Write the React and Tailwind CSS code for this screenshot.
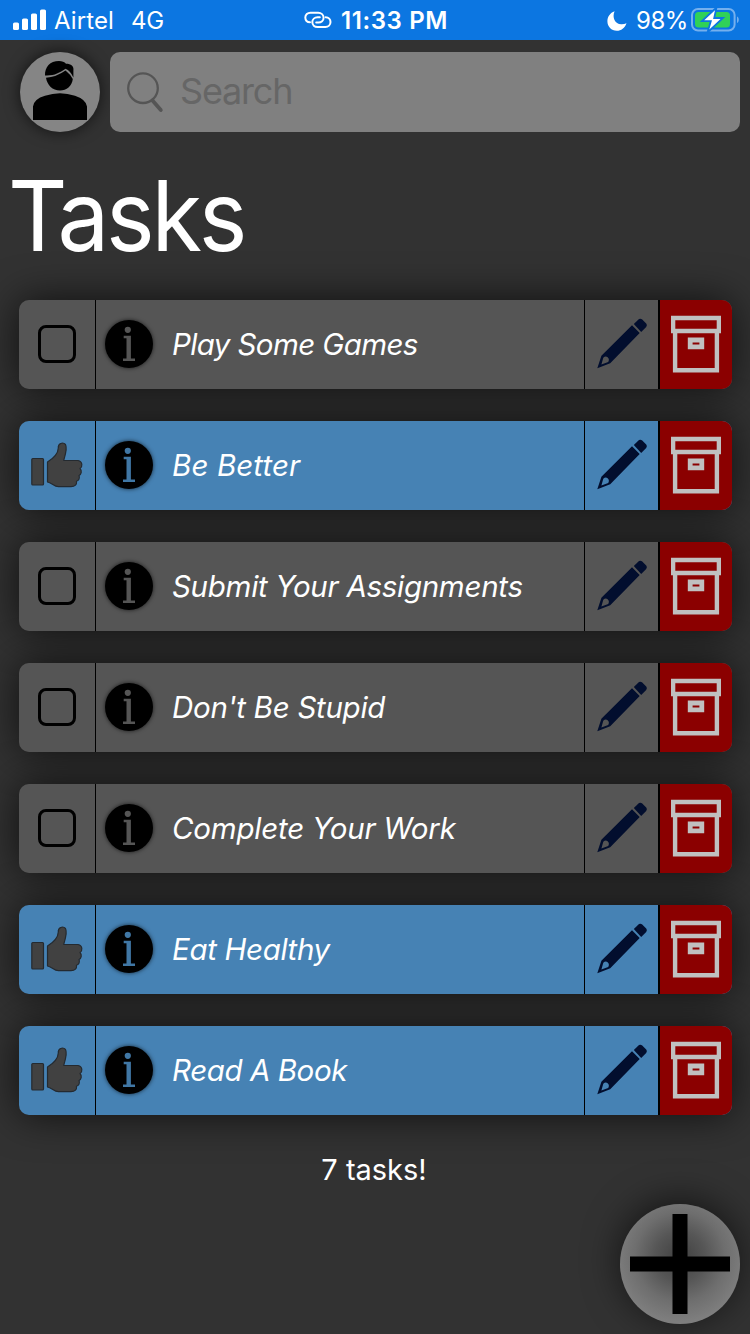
const TASKS = [
  { title: "Play Some Games", done: false, spacing: "tracking-[-0.6px]" },
  { title: "Be Better", done: true, spacing: "tracking-[0.1px]" },
  { title: "Submit Your Assignments", done: false, spacing: "tracking-[-0.28px]" },
  { title: "Don't Be Stupid", done: false, spacing: "tracking-[-0.27px]" },
  { title: "Complete Your Work", done: false, spacing: "tracking-[-0.2px]" },
  { title: "Eat Healthy", done: true, spacing: "tracking-[-0.35px]" },
  { title: "Read A Book", done: true, spacing: "tracking-[-0.42px]" },
];

function StatusBar() {
  return (
    <header className="flex h-10 shrink-0 items-center bg-[#0c76e1] text-[24px] leading-10 whitespace-nowrap">
      <svg className="ml-[13px] h-[22px] w-[34px] shrink-0" viewBox="0 0 34 22" fill="white">
        <rect x="0" y="13.5" width="6" height="7.5" rx="1.6" />
        <rect x="9" y="9.5" width="6" height="11.5" rx="1.6" />
        <rect x="18" y="4.5" width="6" height="16.5" rx="1.6" />
        <rect x="27" y="0.5" width="6" height="20.5" rx="1.6" />
      </svg>
      <span className="mt-0.5 ml-[7px] w-[77px] tracking-[0.1px]">Airtel</span>
      <span className="mt-0.5 w-[173px] tracking-[-0.3px]">4G</span>
      <svg className="h-[18px] w-[28px] shrink-0" viewBox="0 0 28 18" fill="none" stroke="white" strokeWidth="2" strokeLinecap="round">
        <path d="M6 11.3C3 11.3 1.3 9.3 1.3 6.6C1.3 3.7 3.6 1.7 6.4 1.7H14.2C17.2 1.7 19.6 3.9 19.6 6.7C19.6 9.5 17.2 11.5 14.4 11.5H12.2" />
        <path d="M21.7 6.3C24.6 6.3 26.5 8.5 26.5 11.1C26.5 13.9 24.3 16.1 21.4 16.1H13.6C10.6 16.1 8.3 13.9 8.3 11.1C8.3 8.3 10.6 6.3 13.6 6.3H15.8" />
      </svg>
      <span className="mt-0.5 ml-[9px] w-[266px] font-semibold tracking-[0.6px]">11:33 PM</span>
      <svg className="mt-px h-[20px] w-[20px] shrink-0" viewBox="0 0 20 20" fill="white">
        <path d="M7.6 .3C4.8 6.6 8 13.2 14.2 13.3C16.2 13.4 17.8 13 19.5 12.2C17.8 17 14.2 19.8 9.8 19.8C4.4 19.8.4 15.6.4 10.3C.4 6 3.1 1.8 7.6.3Z" />
      </svg>
      <span className="mt-0.5 ml-[9px] w-[55px] tracking-[-0.5px]">98%</span>
      <svg className="h-6 w-12 shrink-0" viewBox="0 0 48 24">
        <rect x="1" y="1" width="42.6" height="21.5" rx="6" fill="none" stroke="#75b0ee" strokeWidth="2" />
        <rect x="4" y="4" width="35" height="15.5" rx="3.5" fill="#30d158" />
        <path d="M46 8.5C48.4 9.3 48.4 14 46 15Z" fill="#75b0ee" />
        <path d="M25.5 -.5L11 13.2H19.8L16.5 24.5L32 10H23.2Z" fill="white" stroke="#0c76e1" strokeWidth="1.8" />
      </svg>
    </header>
  );
}

function Avatar() {
  return (
    <button className="size-20 rounded-full bg-[#858585] shadow-[0_0_16px_rgba(0,0,0,0.65)]">
      <svg viewBox="0 0 80 80" className="size-20">
        <path d="M13 68V54.5Q14 47 25 43.8Q40 38.5 55 43.8Q66 47.5 67 54.5V68Z" />
        <path d="M26 25.7Q36 25.2 45.5 18.5Q50.5 22.5 52.8 27C52 34 46.5 38.5 40 38.5C32.5 38.5 27.2 33 26 25.7Z" />
        <path d="M25 23.5C24.7 15 30 9 39 9C42 9 44.5 10 46 11.8C51 11.8 54.2 14.5 53.4 18.5V25.5Q50.5 19 45.5 16.8C39 21 34.5 24 25 23.5Z" />
      </svg>
    </button>
  );
}

function ThumbIcon() {
  return (
    <svg viewBox="0.5 0 76 89" className="h-[89px] w-[76px]" fill="#414141" stroke="#242a30" strokeWidth="1.2" strokeLinejoin="round">
      <rect x="13.3" y="37.5" width="11.7" height="26.5" rx="1" />
      <path d="M29 41Q39.5 34.5 39.8 27C39.3 22.5 44.3 20.5 47 23.5C49 27 47 33 45.2 39.5H59.5C64.5 40.5 64 46 61.5 47.5C64 50 62.5 53.5 60.5 54.5C61.5 57 60.5 59.5 58 60.3C58.5 63.5 56.5 65.7 52.5 65.7H40C35.5 65.7 33 61.5 29 61Z" />
    </svg>
  );
}

function InfoIcon() {
  return (
    <svg viewBox="0 0 48 48" className="mb-0.5 size-12 shrink-0 rounded-full bg-black fill-current shadow-[0_0_4px_rgba(0,0,0,0.7)]">
      <circle cx="22.8" cy="9.8" r="3.1" />
      <path d="M18.7 15.7H25.9V38.6H30V41H18V38.6H21.5V18.2H18.7Z" />
    </svg>
  );
}

function PencilIcon() {
  return (
    <svg viewBox="0 0 52 52" className="mb-px size-[52px]" fill="#020e2e">
      <path d="M37.8 5.9L43 1Q44.8 .2 46.5 1.7L50.4 5.8Q51.4 7.4 50.2 9L45.2 14Z" />
      <path d="M36 7.2L43.7 15.1L14.2 45.3L1.3 50.3L5.4 37.8ZM7.3 39.8L5.4 46.6L12.2 44Q13.8 41 11.6 39.2Q9.4 37.8 7.3 39.8Z" fillRule="evenodd" />
    </svg>
  );
}

function ArchiveIcon() {
  return (
    <svg viewBox="0 0 50 58" className="mb-0.5 h-[58px] w-[50px]" fill="none" stroke="#c0c0c0" strokeWidth="4.4">
      <path d="M2.1 3H47.9V16H2.1Z" />
      <path d="M4.1 16V55.2H45.9V16" />
      <path d="M19.2 25H30.8V31.8H19.2Z" strokeWidth="4.8" />
    </svg>
  );
}

function TaskRow({ task }) {
  return (
    <li className="h-[89px] w-[713px] rounded-[10px] shadow-[0_0_40px_rgba(0,0,0,0.7)]">
      <div
        className={`relative z-10 flex h-full overflow-hidden rounded-[10px] ${
          task.done ? "bg-[#4682b4]" : "bg-[#555555]"
        }`}
      >
        <button className="flex w-[77px] shrink-0 items-center justify-center border-r border-black">
          {task.done ? (
            <ThumbIcon />
          ) : (
            <span className="mb-px size-[38px] rounded-[8px] border-[3.5px] border-black" />
          )}
        </button>
        <div
          className={`flex w-[489px] shrink-0 items-center border-r border-black pl-[9px] ${
            task.done ? "text-[#4077a5]" : "text-[#555555]"
          }`}
        >
          <InfoIcon />
          <span className={`mb-0.5 ml-[19px] text-[29.5px] leading-9 whitespace-nowrap text-white italic ${task.spacing}`}>
            {task.title}
          </span>
        </div>
        <button className="flex w-[75px] shrink-0 items-center justify-center border-r-2 border-black">
          <PencilIcon />
        </button>
        <button className="flex grow items-center justify-center bg-[#8b0000]">
          <ArchiveIcon />
        </button>
      </div>
    </li>
  );
}

export default function App() {
  return (
    <div className="flex h-[1334px] w-[750px] flex-col overflow-hidden bg-[#323232] font-[Inter,sans-serif] text-white">
      <StatusBar />
      <div className="flex gap-[10px] pt-3 pl-5">
        <Avatar />
        <label className="flex h-20 w-[630px] items-center rounded-[10px] bg-[#808080]">
          <svg viewBox="0 0 38 42" className="ml-4 h-[42px] w-[38px]" fill="none" stroke="#555555">
            <circle cx="17" cy="17.2" r="14.8" strokeWidth="2.3" />
            <path d="M26.5 29.5L34.8 39" strokeWidth="3.8" strokeLinecap="round" />
          </svg>
          <span className="mb-0.5 ml-[16px] text-[36px] leading-none tracking-[-1.2px] text-[#666666]">Search</span>
        </label>
      </div>
      <h1 className="mt-[24px] ml-[8px] h-[120px] w-fit origin-left scale-x-95 text-[97px] leading-[120px] tracking-[-3.4px]">
        Tasks
      </h1>
      <ul className="mt-[24px] ml-[19px] flex flex-col gap-8">
        {TASKS.map((task) => (
          <TaskRow key={task.title} task={task} />
        ))}
      </ul>
      <p className="mt-[35px] pr-0.5 text-center text-[29px] leading-10">7 tasks!</p>
      <button className="mt-[14px] mr-[10px] size-[120px] shrink-0 self-end rounded-full bg-[radial-gradient(circle_at_50%_44%,#404040_0%,#565656_28%,#6e6e6e_50%,#7e7e7e_72%)] shadow-[0_-4px_36px_rgba(0,0,0,0.6)]">
        <svg viewBox="0 0 120 120" className="size-[120px]">
          <path d="M52.5 10H67.5V52.5H110V67.5H67.5V110H52.5V67.5H10V52.5H52.5Z" />
        </svg>
      </button>
    </div>
  );
}
